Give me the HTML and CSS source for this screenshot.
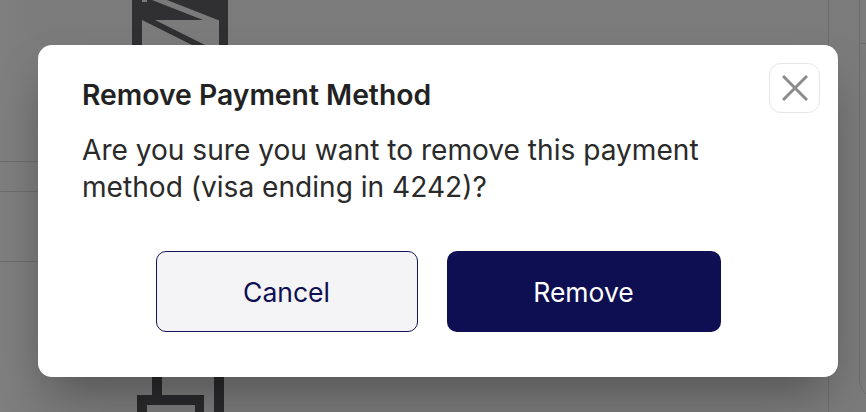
FILE: index.html
```html
<!DOCTYPE html>
<html lang="en">
<head>
<meta charset="utf-8">
<title>Remove Payment Method</title>
<link rel="stylesheet" href="styles.css">
</head>
<body>
<div class="scene">
  <svg class="scene-art" width="866" height="412" viewBox="0 0 866 412" xmlns="http://www.w3.org/2000/svg">
    <g fill="#303032">
      <rect x="132" y="0" width="96" height="20"/>
      <rect x="132" y="20" width="10" height="30"/>
      <rect x="219" y="20" width="9" height="30"/>
      <polygon points="142,20 155,20 205,45 192,45"/>
    </g>
    <polygon fill="#7a7a7a" points="152,0 167,0 218,20 203,20"/>
    <rect fill="#7a7a7a" x="142" y="0" width="5" height="2"/>
    <g fill="#2a2a2c">
      <rect x="152" y="370" width="10" height="26"/>
      <rect x="137" y="395" width="67" height="10"/>
      <rect x="137" y="405" width="10" height="7"/>
      <rect x="195" y="405" width="9" height="7"/>
      <rect x="214" y="370" width="10" height="42"/>
    </g>
    <g stroke="#6c6c6c" stroke-width="1" fill="none">
      <line x1="0" y1="161.5" x2="40" y2="161.5"/>
      <line x1="0" y1="191.5" x2="40" y2="191.5"/>
      <line x1="0" y1="261.5" x2="40" y2="261.5"/>
      <line x1="828.5" y1="0" x2="828.5" y2="412"/>
      <line x1="859.5" y1="0" x2="859.5" y2="43"/>
      <line x1="859.5" y1="43.5" x2="866" y2="43.5"/>
      <path d="M859.5 44 V378 Q859.5 392 870 396"/>
    </g>
  </svg>
</div>
<div class="overlay">
  <div class="modal" role="dialog" aria-labelledby="modal-title">
    <button class="close" type="button" aria-label="Close">
      <svg width="26" height="26" viewBox="0 0 26 26" xmlns="http://www.w3.org/2000/svg">
        <path d="M1 1 L25 25 M25 1 L1 25" stroke="#8c8c8c" stroke-width="3" fill="none"/>
      </svg>
    </button>
    <h2 class="title" id="modal-title">Remove Payment Method</h2>
    <p class="message">Are you sure you want to remove this payment method (visa ending in 4242)?</p>
    <div class="actions">
      <button class="btn btn-cancel" type="button">Cancel</button>
      <button class="btn btn-remove" type="button">Remove</button>
    </div>
  </div>
</div>
</body>
</html>
```

FILE: styles.css
```css
html, body {
  margin: 0;
  height: 100%;
}

body {
  font-family: Inter, "Liberation Sans", Arial, sans-serif;
  overflow: hidden;
}

.scene {
  position: fixed;
  inset: 0;
  background: linear-gradient(90deg, #7f7f7f 0px, #7b7b7b 40px, #7b7b7b 100%);
}

.scene-art {
  display: block;
}

.overlay {
  position: fixed;
  inset: 0;
  display: flex;
  align-items: flex-start;
  padding: 45px 0 0 38px;
}

.modal {
  position: relative;
  width: 800px;
  box-sizing: border-box;
  background: #ffffff;
  border-radius: 14px;
  padding: 33px 44px 45px;
  box-shadow: 0 25px 50px -12px rgba(0, 0, 0, 0.35);
}

.close {
  position: absolute;
  top: 18px;
  right: 18px;
  width: 51px;
  height: 50px;
  box-sizing: border-box;
  padding: 0;
  border: 1px solid #e6e6e6;
  border-radius: 12px;
  background: #ffffff;
  display: flex;
  align-items: center;
  justify-content: center;
}

.title {
  margin: 0;
  font-size: 28.3px;
  font-weight: 600;
  line-height: 34px;
  color: #222222;
}

.message {
  margin: 20px 0 0;
  max-width: 660px;
  font-size: 28.1px;
  line-height: 37px;
  color: #2a2a2a;
}

.actions {
  display: flex;
  justify-content: center;
  gap: 29px;
  margin-top: 45px;
}

.btn {
  height: 81px;
  box-sizing: border-box;
  border-radius: 10px;
  font-family: inherit;
  font-size: 26.5px;
  font-weight: 400;
}

.btn-cancel {
  width: 262px;
  border: 1px solid #14155c;
  background: #f4f4f7;
  color: #0e1052;
}

.btn-remove {
  width: 274px;
  border: none;
  background: #0d0f52;
  color: #ffffff;
}
```
